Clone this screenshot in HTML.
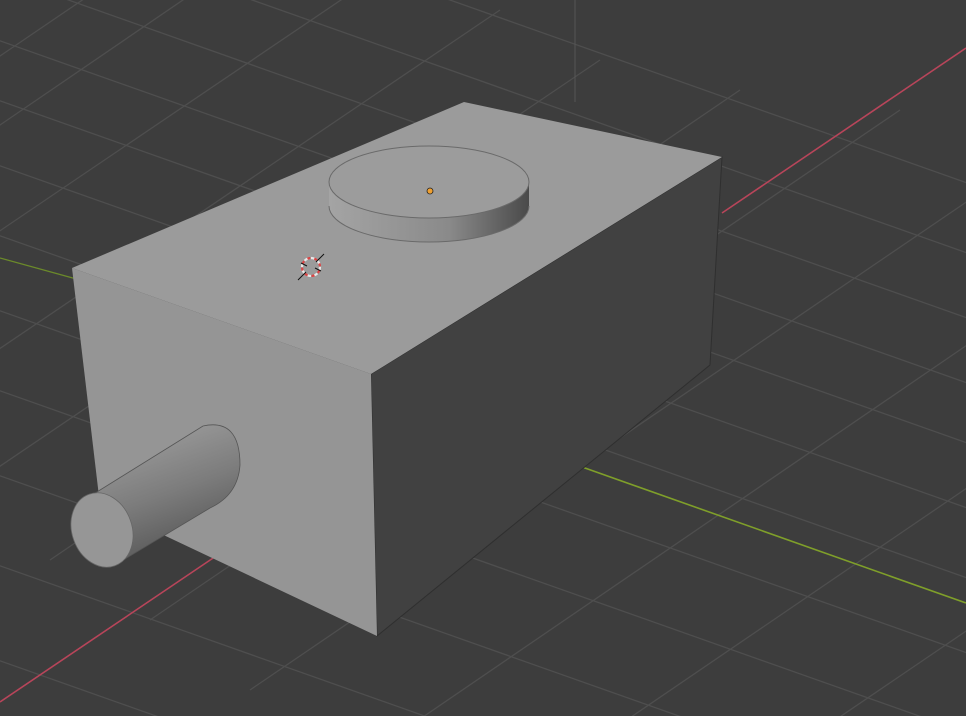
<!DOCTYPE html>
<html><head><style>html,body{margin:0;padding:0;background:#3d3d3d;overflow:hidden;width:966px;height:716px}svg{display:block}</style></head>
<body>
<svg width="966" height="716" viewBox="0 0 966 716" xmlns="http://www.w3.org/2000/svg">
<defs>
<linearGradient id="cyl" x1="0.3" y1="0" x2="0.7" y2="1">
<stop offset="0" stop-color="#a0a0a0"/><stop offset="0.5" stop-color="#7c7c7c"/><stop offset="1" stop-color="#4e4e4e"/></linearGradient>
<linearGradient id="disk" x1="0" y1="0" x2="1" y2="0">
<stop offset="0" stop-color="#a4a4a4"/><stop offset="0.6" stop-color="#8a8a8a"/><stop offset="1" stop-color="#4a4a4a"/></linearGradient>
</defs>
<rect width="966" height="716" fill="#3d3d3d"/>
<g stroke="#4e4e4e" stroke-width="1.3">
<line x1="-200" y1="-30" x2="1100" y2="430"/>
<line x1="-200" y1="30" x2="1100" y2="490"/>
<line x1="-200" y1="95" x2="1100" y2="555"/>
<line x1="-200" y1="165" x2="1100" y2="625"/>
<line x1="-200" y1="240" x2="1100" y2="700"/>
<line x1="-200" y1="320" x2="1100" y2="780"/>
<line x1="-200" y1="405" x2="1100" y2="865"/>
<line x1="-200" y1="495" x2="1100" y2="955"/>
<line x1="-200" y1="590" x2="1100" y2="1050"/>
<line x1="-200" y1="-95" x2="1100" y2="365"/>
<line x1="-200" y1="-160" x2="1100" y2="300"/>
<line x1="-200" y1="-230" x2="1100" y2="230"/>
<line x1="-250" y1="400" x2="400" y2="-40"/>
<line x1="-150" y1="450" x2="500" y2="10"/>
<line x1="-50" y1="500" x2="600" y2="60"/>
<line x1="50" y1="560" x2="740" y2="90"/>
<line x1="150" y1="620" x2="900" y2="110"/>
<line x1="250" y1="690" x2="1050" y2="145"/>
<line x1="360" y1="760" x2="1150" y2="220"/>
<line x1="480" y1="820" x2="1250" y2="295"/>
<line x1="600" y1="880" x2="1350" y2="370"/>
<line x1="730" y1="950" x2="1450" y2="460"/>
<line x1="-300" y1="330" x2="300" y2="-80"/>
<line x1="-300" y1="260" x2="200" y2="-80"/>
</g>
<line x1="0" y1="258" x2="80" y2="280" stroke="#6b8a2a" stroke-width="1.3"/>
<line x1="568" y1="462" x2="966" y2="603" stroke="#7f9f2a" stroke-width="1.6"/>
<line x1="0" y1="702" x2="225" y2="550" stroke="#b8455a" stroke-width="1.6"/>
<line x1="722" y1="213" x2="966" y2="48" stroke="#b8455a" stroke-width="1.6"/>
<line x1="575" y1="0" x2="575" y2="102" stroke="#555" stroke-width="1"/>
<polygon points="371,374 722,157 710,365 377,636" fill="#414141" stroke="#2f2f2f" stroke-width="1"/>
<polygon points="72,268 371,374 377,636 100,505" fill="#959595"/>
<polygon points="72,268 464,102 722,157 371,374" fill="#9b9b9b"/>
<path d="M329,182 L329,206 A100,36 0 0 0 529,206 L529,182 Z" fill="url(#disk)"/>
<ellipse cx="429" cy="182" rx="100" ry="36" fill="#9c9c9c" stroke="#6a6a6a" stroke-width="1"/>
<path d="M329,206 A100,36 0 0 0 529,206" fill="none" stroke="#6a6a6a" stroke-width="1"/>
<circle cx="430" cy="191" r="3" fill="#f0a030" stroke="#222" stroke-width="0.8"/>
<path d="M84,500 L203,426 Q240,418 240,465 Q238,495 210,508 L115,565 Z" fill="url(#cyl)" stroke="#555" stroke-width="0.8"/>
<ellipse cx="102" cy="530" rx="30" ry="38" transform="rotate(-20 102 530)" fill="#969696" stroke="#666" stroke-width="0.8"/>
<g transform="translate(311,267)">
<circle r="9" fill="none" stroke="#e8e8e8" stroke-width="2.2" stroke-dasharray="4 3"/>
<circle r="9" fill="none" stroke="#d44" stroke-width="2.2" stroke-dasharray="3 4" stroke-dashoffset="3.5"/>
<line x1="-13" y1="13" x2="-5" y2="5" stroke="#111" stroke-width="1"/>
<line x1="5" y1="-5" x2="13" y2="-13" stroke="#111" stroke-width="1"/>
<line x1="-10" y1="-4" x2="-4" y2="-1" stroke="#111" stroke-width="1"/>
<line x1="4" y1="1" x2="10" y2="4" stroke="#111" stroke-width="1"/>
</g>
</svg>
</body></html>
